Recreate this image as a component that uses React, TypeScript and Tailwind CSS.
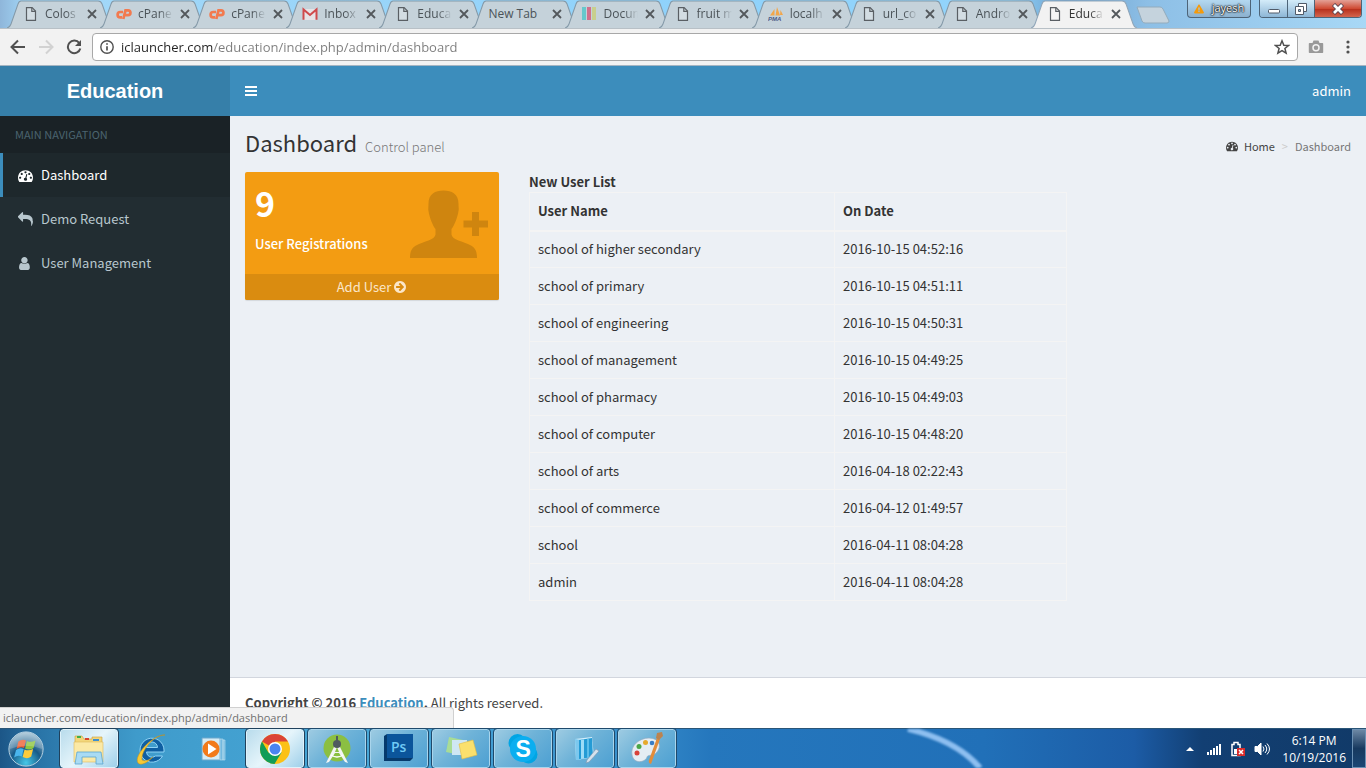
import type { ReactNode } from "react";
import { FaExclamationTriangle } from "react-icons/fa";

const users = [
  { name: "school of higher secondary", date: "2016-10-15 04:52:16" },
  { name: "school of primary", date: "2016-10-15 04:51:11" },
  { name: "school of engineering", date: "2016-10-15 04:50:31" },
  { name: "school of management", date: "2016-10-15 04:49:25" },
  { name: "school of pharmacy", date: "2016-10-15 04:49:03" },
  { name: "school of computer", date: "2016-10-15 04:48:20" },
  { name: "school of arts", date: "2016-04-18 02:22:43" },
  { name: "school of commerce", date: "2016-04-12 01:49:57" },
  { name: "school", date: "2016-04-11 08:04:28" },
  { name: "admin", date: "2016-04-11 08:04:28" },
];

const tabs = [
  { label: "Colos", icon: "page" },
  { label: "cPane", icon: "cpanel" },
  { label: "cPane", icon: "cpanel" },
  { label: "Inbox", icon: "gmail" },
  { label: "Educa", icon: "page" },
  { label: "New Tab", icon: "" },
  { label: "Docum", icon: "bars" },
  { label: "fruit m", icon: "page" },
  { label: "localh", icon: "pma" },
  { label: "url_co", icon: "page" },
  { label: "Andro", icon: "page" },
  { label: "Educa", icon: "page", active: true },
];

const glyphs = {
  dashboard:
    "M384 1152q0-53-37.5-90.5t-90.5-37.5-90.5 37.5-37.5 90.5 37.5 90.5 90.5 37.5 90.5-37.5 37.5-90.5zm192-448q0-53-37.5-90.5t-90.5-37.5-90.5 37.5-37.5 90.5 37.5 90.5 90.5 37.5 90.5-37.5 37.5-90.5zm428 481l101-382q6-26-7.5-48.5t-38.5-29.5-48 6.5-30 39.5l-101 382q-60 5-107 43.5t-63 98.5q-20 77 20 146t117 89 146-20 89-117q16-60-6-117t-72-91zm660-33q0-53-37.5-90.5t-90.5-37.5-90.5 37.5-37.5 90.5 37.5 90.5 90.5 37.5 90.5-37.5 37.5-90.5zm-640-640q0-53-37.5-90.5t-90.5-37.5-90.5 37.5-37.5 90.5 37.5 90.5 90.5 37.5 90.5-37.5 37.5-90.5zm448 192q0-53-37.5-90.5t-90.5-37.5-90.5 37.5-37.5 90.5 37.5 90.5 90.5 37.5 90.5-37.5 37.5-90.5zm320 448q0 261-141 483-19 29-54 29h-1402q-35 0-54-29-141-221-141-483 0-182 71-348t191-286 286-191 348-71 348 71 286 191 191 286 71 348z",
  reply:
    "M1792 1120q0 166-127 451-3 7-10.5 24t-13.5 30-13 22q-12 17-28 17-15 0-23.5-10t-8.5-25q0-9 2.5-26.5t2.5-23.5q5-68 5-123 0-112-19.5-200.5t-54-153.5-89-112-115.5-77.5-139.5-47-155.5-22.5-175-6h-224v256q0 26-19 45t-45 19-45-19l-512-512q-19-19-19-45t19-45l512-512q19-19 45-19t45 19 19 45v256h224q713 0 875 403 53 134 53 333z",
  user: "M1408 1399q0 109-62.5 187t-150.5 78h-854q-88 0-150.5-78t-62.5-187q0-85 8.5-160.5t31.5-152 58.5-131 94-89 134.5-34.5q131 128 313 128t313-128q76 0 134.5 34.5t94 89 58.5 131 31.5 152 8.5 160.5zm-256-887q0 159-112.500 271.500t-271.500 112.500-271.500-112.500-112.500-271.500 112.500-271.500 271.500-112.500 271.500 112.500 112.500 271.500z",
  arrow:
    "M1413 896q0-27-18-45l-91-91-362-362q-18-18-45-18t-45 18l-91 91q-18 18-18 45t18 45l189 189h-502q-26 0-45 19t-19 45v128q0 26 19 45t45 19h502l-189 189q-19 19-19 45t19 45l91 91q18 18 45 18t45-18l362-362 91-91q18-18 18-45zm251 0q0 209-103 385.5t-279.5 279.5-385.5 103-385.5-103-279.5-279.5-103-385.5 103-385.5 279.5-279.5 385.5-103 385.5 103 279.5 279.5 103 385.5z",
};

function Glyph({ name, className }: { name: keyof typeof glyphs; className: string }) {
  return (
    <svg viewBox="0 0 1792 1792" fill="currentColor" className={className} aria-hidden="true">
      <path d={glyphs[name]} />
    </svg>
  );
}

function TabIcon({ icon }: { icon: string }) {
  switch (icon) {
    case "page":
      return (
        <svg viewBox="0 0 16 16" className="h-4 w-4 shrink-0" fill="none" stroke="#5a5f64" strokeWidth="1.2">
          <path d="M3.500 1.600h5.600l3.400 3.500v9.300h-9z" fill="#ffffff" fillOpacity=".25" />
          <path d="M8.800 1.800v3.600h3.600" />
        </svg>
      );
    case "cpanel":
      return (
        <svg viewBox="0 0 16 16" className="h-4 w-4 shrink-0" fill="none" stroke="#f27a4f" strokeWidth="2.700">
          <path d="M7 6H4.300a2.700 2.700 0 0 0 0 5.400H6M7.300 13 9.500 4.300H12a2.400 2.400 0 0 1 0 4.900H9.500" />
        </svg>
      );
    case "gmail":
      return (
        <svg viewBox="0 0 16 16" className="h-4 w-4 shrink-0">
          <path d="M2 3h12v11H2z" fill="#e6e3e6" />
          <path d="M1.500 13.800V3.500L8 9l6.500-5.500v10.300" fill="none" stroke="#d04a4c" strokeWidth="2" />
        </svg>
      );
    case "bars":
      return (
        <svg viewBox="0 0 16 16" className="h-4 w-4 shrink-0">
          <path d="M1 1h4v13H1z" fill="#66c8cc" />
          <path d="M6 1h4v13H6z" fill="#d0708c" />
          <path d="M11 1h4v13h-4z" fill="#c8cf8e" />
        </svg>
      );
    case "pma":
      return (
        <svg viewBox="0 0 16 16" className="h-4 w-4 shrink-0">
          <path d="M2 9.500 6.500 3v6.500zM7.500 9.500 9 1l3 8.500zM12 9l.5-5L15 9z" fill="#f2a64a" />
          <text x="0" y="15" fontSize="6" fontWeight="700" fontStyle="italic" fontFamily="Liberation Sans" fill="#4c5a86">
            PMA
          </text>
        </svg>
      );
    default:
      return null;
  }
}

function BrowserTab({ label, icon, active }: { label: string; icon: string; active?: boolean }) {
  return (
    <div className={`relative h-7 min-w-0 flex-1 ${active ? "z-10" : ""}`}>
      <svg
        viewBox="0 0 106 28"
        preserveAspectRatio="none"
        className="absolute left-0 top-0 h-7 w-[calc(100%+13px)]"
        aria-hidden="true"
      >
        <path
          d="M0 28Q3 27 4 24L11 4Q12 1 14 1H91Q94 1 95 4L102 24Q103 27 106 28"
          fill={active ? "#f2f2f2" : "#c5d2da"}
          stroke={active ? "#8fa5b8" : "#8499a8"}
        />
      </svg>
      <div className="relative flex h-7 items-center pl-4">
        <TabIcon icon={icon} />
        <span
          className={`h-5 whitespace-nowrap text-[12px] leading-5 ${
            icon
              ? "ml-1.5 w-[35px] [mask-image:linear-gradient(90deg,#000_60%,transparent)]"
              : "w-[57px]"
          } ${active ? "text-[#333]" : "text-[#4b5358]"}`}
        >
          {label}
        </span>
        <button type="button" aria-label={`Close ${label}`} className="ml-1 flex h-4 w-4 shrink-0 items-center justify-center">
          <svg viewBox="0 0 10 10" className="h-2.5 w-2.5" stroke="#53585c" strokeWidth="1.8">
            <path d="M1 1l8 8M9 1L1 9" />
          </svg>
        </button>
      </div>
    </div>
  );
}

function WindowControls() {
  return (
    <div className="flex h-[18px] shrink-0 pr-1">
      <button
        type="button"
        className="mr-2 flex w-16 items-center justify-center gap-2 rounded-b border border-t-0 border-[#4d6478] bg-[linear-gradient(#b4d8f0,#8bb1cf)] text-[11px] text-white [text-shadow:0_0_2px_#000,0_0_2px_#000,0_0_1px_#000]"
      >
        <FaExclamationTriangle className="h-2.5 w-2.5 text-[#f59a0a]" />
        jayesh
      </button>
      <div className="flex overflow-hidden rounded-b border border-t-0 border-[#4d6478]">
        <button type="button" aria-label="Minimize" className="flex w-7 items-center justify-center border-r border-[#4d6478] bg-[linear-gradient(#d4ecf9,#8db6d6)]">
          <svg viewBox="0 0 14 12" className="h-3 w-3.5">
            <rect x="1.500" y="6.500" width="11" height="3.500" rx="1" fill="#fff" stroke="#505a68" />
          </svg>
        </button>
        <button type="button" aria-label="Restore" className="flex w-[27px] items-center justify-center border-r border-[#4d6478] bg-[linear-gradient(#d4ecf9,#8db6d6)]">
          <svg viewBox="0 0 14 14" className="h-3.5 w-3.5" fill="#fff" stroke="#505a68">
            <path d="M4.500 1.500h8v8h-8z" />
            <path d="M1.500 4.500h8v8h-8z" />
            <path d="M4.500 7.500h2v2h-2z" fill="#9cc3e0" />
          </svg>
        </button>
        <button type="button" aria-label="Close window" className="flex w-[46px] items-center justify-center bg-[linear-gradient(#e4a196,#cf4b34_50%,#b8321e_55%,#d3654e)]">
          <svg viewBox="0 0 14 12" className="h-3 w-3.5">
            <path d="M2.500 1.500 11.500 10.500M11.500 1.500 2.500 10.500" stroke="#5c4450" strokeWidth="4.500" />
            <path d="M3 2 11 10M11 2 3 10" stroke="#fff" strokeWidth="2.700" />
          </svg>
        </button>
      </div>
    </div>
  );
}

function BrowserChrome() {
  return (
    <header className="shrink-0 font-['Open_Sans',sans-serif]">
      <div className="flex h-7 items-start justify-between bg-[linear-gradient(90deg,#8fb6da,#a3d8f8_2%,#8fd2fb_50%,#93d4fb_74%,#6b9fcc_78%,#8dbfe6_84%,#a8d8f6)]">
        <div className="flex w-[1170px] min-w-0 pl-[7px]">
          {tabs.map((tab, i) => (
            <BrowserTab key={i} {...tab} />
          ))}
          <button type="button" aria-label="New tab" className="ml-3 mt-1.5 h-[18px] w-[34px] shrink-0">
            <svg viewBox="0 0 34 18" className="h-[18px] w-[34px]">
              <path d="M1 1H24Q26 1 27 3L33 15Q33 17 31 17H9Q7 17 6 15Z" fill="#c5d3dd" stroke="#93abbc" />
            </svg>
          </button>
        </div>
        <WindowControls />
      </div>
      <div className="flex h-[38px] items-center border-b border-t border-b-[#a5b5c2] border-t-[#b8c0c6] bg-[#f2f2f2] pl-2.5 pr-2.5 text-[#505050]">
        <button type="button" aria-label="Back" className="mr-3">
          <svg viewBox="0 0 16 16" className="h-4 w-4" fill="none" stroke="currentColor" strokeWidth="2">
            <path d="M15 8H2M8 1.500 1.500 8 8 14.500" />
          </svg>
        </button>
        <button type="button" aria-label="Forward" className="mr-3 text-[#d2d2d2]">
          <svg viewBox="0 0 16 16" className="h-4 w-4" fill="none" stroke="currentColor" strokeWidth="2">
            <path d="M1 8h13M8 1.500 14.500 8 8 14.500" />
          </svg>
        </button>
        <button type="button" aria-label="Reload" className="mr-2.5">
          <svg viewBox="0 0 16 16" className="h-4 w-4" fill="none" stroke="currentColor" strokeWidth="2">
            <path d="M13.300 4.200A6.300 6.300 0 1 0 14.300 9.500" />
            <path d="M15 1v6H9z" fill="currentColor" stroke="none" />
          </svg>
        </button>
        <div className="flex h-7 flex-1 items-center rounded-sm border border-[#a8a8a8] bg-white px-[7px]">
          <svg viewBox="0 0 14 14" className="h-3.5 w-3.5 shrink-0" fill="none" stroke="currentColor" strokeWidth="1.400">
            <circle cx="7" cy="7" r="6.200" />
            <path d="M7 6.200v4.300M7 3.300v1.500" strokeWidth="1.700" />
          </svg>
          <input
            type="text"
            aria-label="Address"
            defaultValue="iclauncher.com/education/index.php/admin/dashboard"
            className="ml-[7px] h-6 min-w-0 flex-1 bg-[linear-gradient(90deg,#222_92px,#7c7c7c_92px)] bg-clip-text text-[13px] text-transparent outline-none"
          />
          <button type="button" aria-label="Bookmark this page">
            <svg viewBox="0 0 16 16" className="h-4 w-4" fill="none" stroke="currentColor" strokeWidth="1.500">
              <path d="M8 1.800 9.800 6.200 14.500 6.500 10.900 9.500 12.100 14.100 8 11.600 3.900 14.100 5.100 9.500 1.500 6.500 6.200 6.200z" />
            </svg>
          </button>
        </div>
        <button type="button" aria-label="Screenshot extension" className="ml-2.5">
          <svg viewBox="0 0 16 16" className="h-4 w-4">
            <path d="M1.500 4h3l1-2.500h5l1 2.500h3q.7 0 .7.7v8.600q0 .7-.7.7h-13q-.7 0-.7-.7V4.700q0-.7.7-.7z" fill="#999" />
            <circle cx="8" cy="8.800" r="3" fill="#999" stroke="#f2f2f2" strokeWidth="1.500" />
          </svg>
        </button>
        <button type="button" aria-label="Menu" className="ml-4">
          <svg viewBox="0 0 16 16" className="h-4 w-4" fill="currentColor">
            <circle cx="8" cy="3" r="1.600" />
            <circle cx="8" cy="8" r="1.600" />
            <circle cx="8" cy="13" r="1.600" />
          </svg>
        </button>
      </div>
    </header>
  );
}

function Sidebar() {
  return (
    <aside className="w-[230px] shrink-0 bg-[#222d32]">
      <a href="#" className="flex h-[50px] items-center justify-center bg-[#367fa9] font-['Liberation_Sans',sans-serif] text-[20px] font-bold text-white">
        Education
      </a>
      <div className="h-[37px] bg-[#1a2226] px-[15px] text-[11px] leading-[37px] text-[#4b646f]">MAIN NAVIGATION</div>
      <nav>
        <ul className="text-[13px] text-[#b8c7ce]">
          <li>
            <a href="#dashboard" className="flex h-11 items-center gap-2 border-l-[3px] border-[#3c8dbc] bg-[#1e282c] pl-[15px] text-white">
              <Glyph name="dashboard" className="h-[15px] w-[15px]" />
              Dashboard
            </a>
          </li>
          <li>
            <a href="#demo" className="flex h-11 items-center gap-2 border-l-[3px] border-transparent pl-[15px]">
              <Glyph name="reply" className="h-[15px] w-[15px]" />
              Demo Request
            </a>
          </li>
          <li>
            <a href="#users" className="flex h-11 items-center gap-2 border-l-[3px] border-transparent pl-[15px]">
              <Glyph name="user" className="h-[15px] w-[15px]" />
              User Management
            </a>
          </li>
        </ul>
      </nav>
    </aside>
  );
}

function RegistrationCard() {
  return (
    <div className="overflow-hidden rounded-[2px] bg-[#f39c12] text-white shadow-[0_1px_1px_rgba(0,0,0,0.1)]">
      <div className="flex h-[102px] justify-between px-2.5">
        <div>
          <h3 className="mt-2.5 text-[34px] font-bold leading-[42px]">9</h3>
          <p className="mt-2.5 text-[13px] font-medium leading-5">User Registrations</p>
        </div>
        <svg viewBox="0 0 80 70" className="mt-[18px] h-[70px] w-20" fill="#cf850f" aria-hidden="true">
          <path d="M34.500 0.500C43 .5 50 4 49.500 15C49.500 17 50 19 49.500 21C48.500 28 45 36 42.500 39V44.500C43 50 54 51 62 55.500C67 58 68 63 68 68H1C1 63 2 58 7 55.500C15 51 26 50 26.500 44.500V39C24 36 20.500 28 19.500 21C19 19 19.500 17 19.500 15C19 4 26 .5 34.500 .5Z" />
          <path d="M63 22v8.500h-8.500v7H63V46h7v-8.500h9v-7h-9V22z" />
        </svg>
      </div>
      <a href="#add" className="flex h-[26px] items-center justify-center gap-0.5 bg-[#da8c10] text-[13px] text-[#fbe6c8]">
        Add User
        <Glyph name="arrow" className="h-3.5 w-3.5" />
      </a>
    </div>
  );
}

function UserTable() {
  return (
    <div>
      <h2 className="text-[13px] font-bold leading-5">New User List</h2>
      <table className="w-full table-fixed border-collapse border border-[#f4f4f4] text-left text-[13px] leading-5">
        <thead>
          <tr>
            <th className="h-[38px] w-[305px] border border-b-2 border-[#f4f4f4] px-2 font-bold">User Name</th>
            <th className="border border-b-2 border-[#f4f4f4] px-2 font-bold">On Date</th>
          </tr>
        </thead>
        <tbody>
          {users.map((user) => (
            <tr key={user.name}>
              <td className="h-[37px] border border-[#f4f4f4] px-2">{user.name}</td>
              <td className="border border-[#f4f4f4] px-2">{user.date}</td>
            </tr>
          ))}
        </tbody>
      </table>
    </div>
  );
}

function TaskButton({ label, open, active, children }: { label: string; open?: boolean; active?: boolean; children: ReactNode }) {
  const frame = active
    ? "border-[#dff2fb] bg-[linear-gradient(135deg,#b9dcec,#e6f5fb_50%,#9fd0ea)] outline outline-[#20415c]"
    : open
      ? "border-[#a9d5ec] bg-[linear-gradient(135deg,#9dcbe2,#6fb3d8_45%,#4da0d2)] outline outline-[#1f4a6c]"
      : "border-transparent";
  return (
    <button type="button" aria-label={label} className={`flex w-[58px] shrink-0 items-center justify-center rounded-[3px] border ${frame}`}>
      <svg viewBox="0 0 36 36" className="h-9 w-9">
        {children}
      </svg>
    </button>
  );
}

function Taskbar() {
  return (
    <footer className="flex h-10 shrink-0 justify-between border-t border-[#2a5577] bg-[linear-gradient(90deg,#1c5687,#2a75a8_3%,#3f9bcb_10%,#48a8d8_28%,#3a91cd_45%,#2577bd_52%,#2170b8_72%,#1c5ca6_83%,#123f73_88%,#113a68)] font-['Open_Sans',sans-serif]">
      <div className="flex gap-1">
        <button type="button" aria-label="Start" className="mr-1 flex w-[52px] items-center justify-center">
          <svg viewBox="0 0 40 40" className="h-[38px] w-[38px]">
            <defs>
              <radialGradient id="orb" cx=".5" cy=".9" r=".9">
                <stop offset="0" stopColor="#45c8e8" />
                <stop offset=".5" stopColor="#175a88" />
                <stop offset="1" stopColor="#a8c6d8" />
              </radialGradient>
            </defs>
            <circle cx="20" cy="20" r="18" fill="url(#orb)" stroke="#bcd5e4" />
            <path d="M12 12q4-3 8-1l-2 8q-4-2-8 1z" fill="#ee6135" />
            <path d="M21 11.500q4 2 9-.5l-2 8q-4 3-9 .5z" fill="#8ec641" />
            <path d="M9.500 21q4-3 8-1l-2 8q-4-2-8 1z" fill="#4ab5ec" />
            <path d="M18.500 20.500q4 2 9-.5l-2 8q-4 3-9 .5z" fill="#fccb3a" />
            <path d="M3 20a17 17 0 0 1 34 0q-17-7-34 0z" fill="#fff" opacity=".2" />
          </svg>
        </button>
        <TaskButton label="Windows Explorer" open active>
          <path d="M4 8V5h7l2 3h8V6h10v24H4z" fill="#f3d67a" stroke="#c99f3c" strokeWidth=".6" />
          <path d="M6 5h4v2H6z" fill="#3fae49" />
          <path d="M14 7h4v2h-4z" fill="#d8452d" />
          <path d="M22 8h6v2h-6z" fill="#3e8fd0" />
          <path d="M3 11h29v20H3z" fill="#fbe9a6" stroke="#ddb95a" strokeWidth=".6" />
          <path d="M4 33l2-12h24l2 12h-7v-7H11v7z" fill="#a9dbf4" stroke="#5ca5cf" strokeWidth=".8" />
        </TaskButton>
        <TaskButton label="Internet Explorer">
          <path d="M31 19a12 12 0 1 0-1.500 6h-7a5.500 5.500 0 0 1-9-4H31zM13.500 16.500a5.500 5.500 0 0 1 11 0z" fill="#0f5fa2" stroke="#8fd3f5" strokeWidth="1" />
          <path d="M5 32C0 25 20 3 32 4c-11 0-24 15-23 25 3 2 7 0 11-3-6 6-12 9-15 6z" fill="#f7c935" stroke="#c78f16" strokeWidth=".5" />
        </TaskButton>
        <TaskButton label="Media Player">
          <path d="M7 7h18v22H7z" fill="#d5ebf5" stroke="#6ba7cc" />
          <path d="M25 8h3v21h-3zM28 9h2v20h-2z" fill="#73b9df" stroke="#bfe0f0" strokeWidth=".6" />
          <circle cx="16" cy="18" r="8.500" fill="#f27a1a" />
          <path d="M13 12.500v11l8.500-5.500z" fill="#fff" />
        </TaskButton>
        <TaskButton label="Chrome" open active>
          <circle cx="18" cy="18" r="15" fill="#fbc116" />
          <path d="M18 18 5 10.500A15 15 0 0 1 31 10.500H18z" fill="#db4437" />
          <path d="M5 10.500A15 15 0 0 0 17.500 33L24.500 21.500 18 18 11.500 21.700z" fill="#109d58" />
          <circle cx="18" cy="18" r="7" fill="#fff" />
          <circle cx="18" cy="18" r="5.500" fill="#4a84f0" />
        </TaskButton>
        <TaskButton label="Android Studio" open>
          <circle cx="18" cy="17" r="13.500" fill="#8bbf42" />
          <path d="M16 14h4l9 18-3-1-6-9h-4l-6 9-3 1z" fill="#f3f5f3" />
          <path d="M16 21 18 16 20 21z" fill="#8bbf42" />
          <path d="M12 24q6 4 12 0" stroke="#fff" strokeWidth="1.500" fill="none" />
          <circle cx="18" cy="13" r="4" fill="#505b60" />
          <path d="M17 5h2v6h-2z" fill="#505b60" />
        </TaskButton>
        <TaskButton label="Photoshop" open>
          <path d="M3 5l3-2h26v24l-3 3H3z" fill="#063a6c" />
          <path d="M6 3h26v24H6z" fill="#0b559b" />
          <text x="10" y="21" fontSize="14" fontWeight="600" fontFamily="Open Sans" fill="#70c9f5">
            Ps
          </text>
        </TaskButton>
        <TaskButton label="Sticky Notes" open>
          <path d="M6 6l14 3-3 15-14-3z" fill="#a8dc96" />
          <path d="M9 9h15v15H9z" fill="#cfe7f4" />
          <path d="M16 13l14-4 4 15-15 4z" fill="#fbe06d" stroke="#e0bc45" strokeWidth=".6" />
        </TaskButton>
        <TaskButton label="Skype" open>
          <circle cx="12.500" cy="12" r="9" fill="#00a5e4" />
          <circle cx="23.500" cy="23.500" r="9" fill="#00a5e4" />
          <circle cx="18" cy="18" r="13" fill="#0aaef0" />
          <text x="10.500" y="26" fontSize="23" fontWeight="700" fontFamily="Liberation Sans" fill="#fff">
            S
          </text>
        </TaskButton>
        <TaskButton label="Journal" open>
          <path d="M8 8 25 6 27 26 9 29z" fill="#d3eefb" />
          <path d="M8 8l6 1v20l-5 0z" fill="#7cc8ee" />
          <path d="M12 9 25 7l1 19-14 2z" fill="#249bd5" />
          <path d="M14 9l3-.5v19l-3 .5z" fill="#9ddcf7" />
          <path d="M20 8l2-.3v19l-2 .3z" fill="#5cbde9" />
          <path d="M32 20 22 31l-3 1 1-3 9-11z" fill="#d5e2ed" stroke="#7c96ae" strokeWidth=".6" />
        </TaskButton>
        <TaskButton label="Paint" open>
          <path d="M3 24C1 15 10 7 20 7c10 0 13 8 8 14-4 5-9 2-10 5-1 5-13 8-15-2z" fill="#e5edf3" stroke="#92abc0" strokeWidth=".7" />
          <circle cx="8" cy="22" r="2.500" fill="#d8423a" />
          <circle cx="10" cy="15.500" r="2.500" fill="#4aa647" />
          <circle cx="16.500" cy="11.500" r="2.500" fill="#e6a92c" />
          <circle cx="23" cy="12" r="2.300" fill="#397dc5" />
          <path d="M28 7l3 1-9 25q-3-1-2-4z" fill="#e28c3a" />
          <path d="M27 7l1-5 5-1 1 4-4 4z" fill="#bb8350" />
        </TaskButton>
      </div>
      <svg viewBox="0 0 90 40" preserveAspectRatio="none" className="ml-[226px] h-[39px] w-[90px] blur-[1px]" aria-hidden="true">
        <path d="M6 0Q55 12 78 40" fill="none" stroke="#8ebff0" strokeWidth="6" />
      </svg>
      <div className="ml-auto flex items-center text-white">
        <svg viewBox="0 0 8 8" className="mr-3 h-2 w-2" fill="#fff">
          <path d="M0 6 4 2 8 6z" />
        </svg>
        <svg viewBox="0 0 16 16" className="mr-2 h-4 w-4" fill="#fff">
          <path d="M1 11h2v3H1zM4 9h2v5H4zM7 7h2v7H7zM10 5h2v9h-2zM13 3h2v11h-2z" />
        </svg>
        <svg viewBox="0 0 16 16" className="mr-2 h-4 w-4">
          <path d="M2 3.500h2V1.500h4v2h2v11H2z" fill="none" stroke="#fff" strokeWidth="1.500" />
          <path d="M4 8h4v5H4z" fill="#fff" />
          <path d="M7 7h8v8H7z" fill="#d92b2b" />
          <path d="M9 9l4 4M13 9l-4 4" stroke="#fff" strokeWidth="1.500" />
        </svg>
        <svg viewBox="0 0 16 16" className="mr-3 h-4 w-4" fill="none" stroke="#fff">
          <path d="M1 5.500h2.500L7 2v12l-3.500-3.500H1z" fill="#fff" />
          <path d="M9 5.500q2 2.500 0 5M11 4q3.500 4 0 8M13 2.500q5 5.500 0 11" />
        </svg>
        <time className="whitespace-nowrap text-center text-[12px] leading-[17px]">
          6:14 PM
          <br />
          10/19/2016
        </time>
        <button type="button" aria-label="Show desktop" className="ml-1.5 h-full w-3.5 border border-[#6c91b4] bg-[linear-gradient(#6c87a4,#17395f_50%,#1b4674)]" />
      </div>
    </footer>
  );
}

export default function App() {
  return (
    <div className="flex min-h-screen flex-col bg-white">
      <BrowserChrome />
      <div className="relative flex flex-1 font-['Noto_Sans_CJK_SC','Noto_Sans',sans-serif] text-[13px] text-[#333]">
        <Sidebar />
        <div className="flex min-w-0 flex-1 flex-col bg-[#ecf0f5]">
          <div className="flex h-[50px] items-center justify-between bg-[#3c8dbc] px-[15px] text-white">
            <button type="button" aria-label="Toggle navigation">
              <svg viewBox="0 0 12 10" className="h-2.5 w-3" fill="currentColor">
                <path d="M0 0h12v2H0zM0 4h12v2H0zM0 8h12v2H0z" />
              </svg>
            </button>
            <a href="#admin">admin</a>
          </div>
          <div className="flex h-14 items-center justify-between px-[15px]">
            <h1 className="flex items-baseline gap-2 text-[22px] leading-[26px]">
              Dashboard
              <small className="text-[13px] font-light text-[#777]">Control panel</small>
            </h1>
            <ol className="mt-1 flex items-center text-[11px] text-[#777]">
              <li>
                <a href="#home" className="flex items-center gap-1.5 text-[#444]">
                  <Glyph name="dashboard" className="h-3 w-3" />
                  Home
                </a>
              </li>
              <li className="px-[7px] text-[#ccc]">&gt;</li>
              <li>Dashboard</li>
            </ol>
          </div>
          <main className="flex flex-1 items-start">
            <div className="w-1/4 px-[15px]">
              <RegistrationCard />
            </div>
            <div className="w-1/2 px-[15px]">
              <UserTable />
            </div>
          </main>
          <div className="border-t border-[#d2d6de] bg-white p-[15px] leading-5 text-[#444]">
            <strong>
              Copyright © 2016{" "}
              <a href="#education" className="text-[#3c8dbc]">
                Education
              </a>
              .
            </strong>{" "}
            All rights reserved.
          </div>
        </div>
        <div className="absolute bottom-0 left-0 h-[21px] w-[454px] rounded-tr-sm border-r border-t border-[#d0d0d0] bg-[#f2f2f2] pl-[3px] font-['Open_Sans',sans-serif] text-[11px] leading-5 text-[#707070]">
          iclauncher.com/education/index.php/admin/dashboard
        </div>
      </div>
      <Taskbar />
    </div>
  );
}
